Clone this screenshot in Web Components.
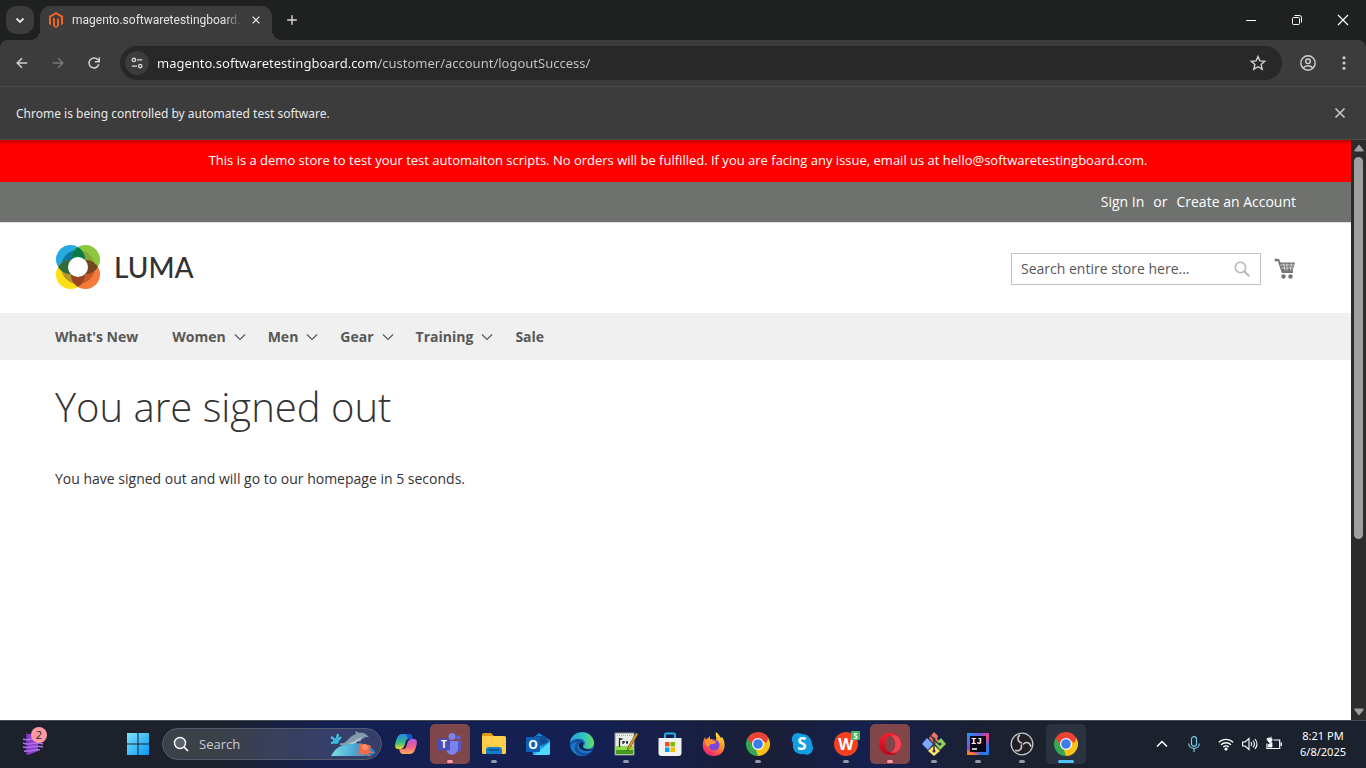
<!DOCTYPE html>
<html lang="en">
<head>
<meta charset="utf-8">
<title>You are signed out</title>
<style>
  html, body { margin: 0; height: 100%; }
  body { font-family: "Open Sans", "Noto Sans", sans-serif; overflow: hidden; background: #3c3c3c; }
</style>
</head>
<body>
<desktop-screen></desktop-screen>

<script>
const ICONS = {
  chevron: ['0 0 16 16', '<path d="M4.500 6.500 8 10l3.500-3.500" fill="none" stroke="#e3e3e3" stroke-width="1.800"/>'],
  magento: ['0 0 16 16', '<path fill="#f26322" d="M8 0 15 4v8l-2 1.200V5.200L8 2.300 3 5.200v8L1 12V4zM7 6.500v7l1 .6 1-.6v-7h0l2 0V14l-3 2-3-2V5.500z"/><path d="M7 5h2v8.500l-1 .6-1-.6z" fill="#3c3c3c"/>'],
  close: ['0 0 16 16', '<path d="m3.500 3.500 9 9m0-9-9 9" stroke="currentColor" stroke-width="1.700" fill="none"/>'],
  plus: ['0 0 16 16', '<path d="M8 2.500v11M2.500 8h11" stroke="#d8d8d8" stroke-width="1.600"/>'],
  minimize: ['0 0 16 16', '<path d="M3 8.500h10" stroke="#fff"/>'],
  restore: ['0 0 16 16', '<rect x="3.500" y="5.500" width="7" height="7" rx="1" fill="none" stroke="#fff"/><path d="M5.500 3.500h5a2 2 0 0 1 2 2v5" fill="none" stroke="#fff"/>'],
  shut: ['0 0 16 16', '<path d="m3 3 10 10m0-10L3 13" stroke="#fff" stroke-width="1.200"/>'],
  back: ['0 0 16 16', '<path d="M14 8H3m5-5.500L2.500 8 8 13.500" fill="none" stroke="#d0d0d0" stroke-width="1.700"/>'],
  forward: ['0 0 16 16', '<path d="M2 8h11M8 2.500 13.500 8 8 13.500" fill="none" stroke="#787878" stroke-width="1.700"/>'],
  reload: ['0 0 16 16', '<path d="M13.500 9.500A5.700 5.700 0 1 1 12.200 4L14 6" fill="none" stroke="#d0d0d0" stroke-width="1.700"/><path d="M14 1.500v5H9" fill="none" stroke="#d0d0d0" stroke-width="1.700"/>'],
  tune: ['0 0 16 16', '<g fill="none" stroke="#d8d8d8" stroke-width="1.500"><circle cx="4.500" cy="4.500" r="1.900"/><path d="M8 4.500h6M2 11.500h6"/><circle cx="11.700" cy="11.500" r="1.900"/></g>'],
  star: ['0 0 16 16', '<path d="m8 1.500 1.900 4.400 4.800.4-3.600 3.200 1.100 4.700L8 11.700l-4.200 2.500 1.100-4.700L1.300 6.300l4.800-.4z" fill="none" stroke="#d0d0d0" stroke-width="1.400"/>'],
  profile: ['0 0 16 16', '<g fill="none" stroke="#d0d0d0" stroke-width="1.400"><circle cx="8" cy="8" r="7.200"/><circle cx="8" cy="6.300" r="2.300"/><path d="M3.200 13c2.500-3 7-3 9.600 0"/></g>'],
  dots: ['0 0 16 16', '<g fill="#d0d0d0"><circle cx="8" cy="2.800" r="1.500"/><circle cx="8" cy="8" r="1.500"/><circle cx="8" cy="13.200" r="1.500"/></g>'],
  luma: ['0 0 44 44', '<circle cx="14.500" cy="14.500" r="14.500" fill="#26a8e0"/><circle cx="29.500" cy="14.500" r="14.500" fill="#8dc63f"/><circle cx="14.500" cy="29.500" r="14.500" fill="#fddd14"/><circle cx="29.500" cy="29.500" r="14.500" fill="#f47a3a"/><clipPath id="tl"><circle cx="14.500" cy="14.500" r="14.500"/></clipPath><clipPath id="tr"><circle cx="29.500" cy="14.500" r="14.500"/></clipPath><clipPath id="bl"><circle cx="14.500" cy="29.500" r="14.500"/></clipPath><clipPath id="br"><circle cx="29.500" cy="29.500" r="14.500"/></clipPath><circle cx="22" cy="22" r="17" fill="#0f76a2" clip-path="url(#tl)"/><circle cx="22" cy="22" r="17" fill="#87a53a" clip-path="url(#tr)"/><circle cx="22" cy="22" r="17" fill="#b6962c" clip-path="url(#bl)"/><circle cx="22" cy="22" r="17" fill="#c55a2b" clip-path="url(#br)"/><g clip-path="url(#tl)"><circle cx="29.500" cy="14.500" r="14.500" fill="#087c46"/><circle cx="14.500" cy="29.500" r="14.500" fill="#2f6a39"/></g><g clip-path="url(#br)"><circle cx="29.500" cy="14.500" r="14.500" fill="#70471f"/><circle cx="14.500" cy="29.500" r="14.500" fill="#9a4524"/></g><circle cx="22" cy="22" r="10" fill="#fff"/>'],
  magnify: ['0 0 16 16', '<circle cx="6.500" cy="6.500" r="5.200" fill="none" stroke="#b8b8b8" stroke-width="1.600"/><path d="m10.300 10.300 4.900 4.900" stroke="#b8b8b8" stroke-width="2"/>'],
  cart: ['0 0 22 22', '<path d="M1 2h3.500l4 12H19" fill="none" stroke="#757575" stroke-width="1.800"/><circle cx="2" cy="2" r="1.500" fill="#757575"/><path d="M4.500 4.500H21L18.500 13H7.500z" fill="#757575"/><path d="M6 7h14M7 10h12M9.500 5.500l1.500 7m2-7v7m4.500-7-1 7" stroke="#fff" stroke-width=".6"/><circle cx="9.500" cy="18.500" r="2.200" fill="#757575"/><circle cx="16.500" cy="18.500" r="2.200" fill="#757575"/>'],
  down: ['0 0 12 12', '<path d="m1 3.500 5 5 5-5" fill="none" stroke="#575757" stroke-width="1.200"/>'],
  arrowup: ['0 0 10 8', '<path d="M5 .5 9.500 6v1.500h-9V6z" fill="#9f9f9f"/>'],
  arrowdown: ['0 0 10 8', '<path d="M5 7.500 9.500 2V.5h-9V2z" fill="#9f9f9f"/>'],
  widget: ['0 0 24 24', '<path d="M5 1l4 2v18l-4 2z" fill="#7031ae"/><path d="M7 2h10v17L7 23z" fill="#8d3fcd"/><path d="M2 7c6 3 12-3 20 0M2 11c7 3 12-2 20 1M2 15c7 2 12-3 20 0M3 19c7 1 10-2 16-1" fill="none" stroke="#ad72ea" stroke-width="1.500"/>'],
  start: ['0 0 24 24', '<linearGradient id="w" x1="0" y1="0" x2="24" y2="24" gradientUnits="userSpaceOnUse"><stop stop-color="#80e8fc"/><stop offset="1" stop-color="#0592f5"/></linearGradient><path fill="url(#w)" d="M1 1h10.500v10.500H1zm11.500 0H23v10.500H12.500zM1 12.500h10.500V23H1zm11.500 0H23V23H12.500z"/>'],
  find: ['0 0 16 16', '<circle cx="7" cy="7" r="5.500" fill="#5b616d" stroke="#fff" stroke-width="1.400"/><path d="m11 11 4 4" stroke="#fff" stroke-width="1.700"/>'],
  dolphin: ['0 0 48 28', '<linearGradient id="sea" x1="0" x2="1"><stop stop-color="#7bdce2"/><stop offset="1" stop-color="#1c78c9"/></linearGradient><path d="M2 26C6 18 14 13 25 13c10 0 18 3 22 10l-6 3z" fill="url(#sea)"/><path d="M11 13c7 2 8-7 16-9l-1-3 5 2c5-1 6 2 9 4-6 0-7 2-9 5l-4-2c-5 3-9 6-16 5z" fill="#829aab"/><path d="M17 13c7 1 10-5 18-6-5 1-5 6-12 7z" fill="#b8c9d0"/><path d="m2 7 3 2m4-5-1 4M2 13l5-1m5-5-3 3" stroke="#4cc7e4" stroke-width="2.200"/><circle cx="7" cy="11" r="3" fill="#39b8df"/><path d="M31 20c-5-6 4-9 6-3 4-5 7 1 3 3l6 3-7 0 3 4-6-3-4 2 0-3-6 3 5-5-6 0z" fill="#ef6b4a"/><circle cx="36" cy="17" r="3" fill="#ff8a61"/>'],
  copilot: ['0 0 24 24', '<linearGradient id="c1" x2="0" y2="1"><stop stop-color="#2387ee"/><stop offset=".55" stop-color="#31b987"/><stop offset="1" stop-color="#f0d91e"/></linearGradient><linearGradient id="c2" x2="0" y2="1"><stop stop-color="#b55aec"/><stop offset=".5" stop-color="#f15c87"/><stop offset="1" stop-color="#ffad54"/></linearGradient><path d="M8 2h7c3 0 3 3 4 5h-4c-3 0-3 2-4 5s-2 5-5 5H4c-4 0-3-5-2-8s2-7 6-7" fill="url(#c1)"/><path d="M16 22H9c-3 0-3-3-4-5h4c3 0 3-2 4-5s2-5 5-5h2c4 0 3 5 2 8s-2 7-6 7" fill="url(#c2)"/><path d="M12 2h3c3 0 3 3 4 5h-5z" fill="#1e4fd0"/>'],
  teams: ['0 0 24 24', '<circle cx="20.500" cy="5.500" r="2.300" fill="#5b67d5"/><circle cx="14" cy="4.500" r="3.500" fill="#7b83eb"/><path d="M18 9h5.500v6c0 3-2 5-4 5h-3z" fill="#5059c9"/><path d="M8 9h12v7c0 9-12 9-12 0z" fill="#7b83eb"/><rect y="6.500" width="12" height="12" rx="1" fill="#4650b8"/><text x="6" y="16" text-anchor="middle" font-size="10" font-weight="700" fill="#fff">T</text>'],
  folder: ['0 0 24 24', '<path d="M0 3q0-2 2-2h7l3 3v5H0z" fill="#e09a10"/><rect y="4" width="24" height="18" rx="1.500" fill="#ffcf4b"/><path d="M4 22v-4q0-3 3-3h10q3 0 3 3v4z" fill="#137dc9"/><path d="M7 18h10" stroke="#0a4f8d" stroke-width="1.500"/>'],
  outlook: ['0 0 24 24', '<path d="m4 8 9-7 11 7v13q0 2-2 2H8z" fill="#1683d8"/><path d="M10 4h9l4 6-12 5z" fill="#124d99"/><path d="m5 8 12 7 7-6v12q0 2-2 2H7z" fill="#28a8ea"/><path d="M8 23 24 10v11q0 2-2 2z" fill="#50d9ff"/><rect y="5" width="14" height="15" rx="1.200" fill="#0f5fb5"/><text x="7" y="17" text-anchor="middle" font-size="12" font-weight="700" fill="#fff">O</text>'],
  edge: ['0 0 24 24', '<linearGradient id="e1" x1="0" x2="1"><stop stop-color="#229ee0"/><stop offset=".6" stop-color="#35c5bb"/><stop offset="1" stop-color="#66dc58"/></linearGradient><circle cx="12" cy="12" r="12" fill="#1879c9"/><path d="M0 11C1-2 21-4 24 10c1 6-6 8-10 6-2-1 1-2 1-5 0-5-9-6-15 0z" fill="url(#e1)"/><path d="M0 11c5-6 12-4 13-1-7-1-7 7-2 10s10 0 11-1c-3 5-11 6-15 2-3-3-3-8 0-11-4 0-6 3-7 4z" fill="#164d9f"/><path d="M13 10c-6 0-5 6-1 8s10 1 11-1c1-1 0-1-1 0-3 1-8 0-9-2s2-3 0-5" fill="#14234e"/>'],
  notes: ['0 0 24 24', '<rect x="1" y="1" width="19" height="22" fill="#e7eeea" stroke="#7f8e84"/><path d="M2 14h17v8H2z" fill="#8fdb4a"/><path d="M2 18h17v4H2z" fill="#3f9b18"/><path d="M3 3.500h15" stroke="#a3aca6" stroke-dasharray="1 1"/><path d="M5.500 6v9M5.500 7h3M9 10h2m1 0h2M9 9v3m4-3v3" stroke="#252525" stroke-width="1.300"/><path d="m22 1-8 14-1 4 3-3 8-14z" fill="#e69b23" stroke="#734e1c" stroke-width=".7"/>'],
  store: ['0 0 24 24', '<path d="M7 7V2.500Q7 1.500 8 1.500h8q1 0 1 1V7" fill="none" stroke="#27aee6" stroke-width="2"/><path d="M.5 6h23v15q0 3-3 3h-17q-3 0-3-3z" fill="#f2f2f2"/><path d="M7 10h4.500v4.500H7z" fill="#f25022"/><path d="M12.500 10H17v4.500h-4.500z" fill="#7fba00"/><path d="M7 15.500h4.500V20H7z" fill="#00a4ef"/><path d="M12.500 15.500H17V20h-4.500z" fill="#ffb900"/>'],
  firefox: ['0 0 24 24', '<linearGradient id="f1" x1=".8" x2=".2" y2="1"><stop stop-color="#fff14d"/><stop offset=".4" stop-color="#ff9a22"/><stop offset=".8" stop-color="#ff3b59"/><stop offset="1" stop-color="#e52088"/></linearGradient><path d="M14 0c3 2 4 5 5 6l1-1c5 7 3 19-8 19C2 24-2 14 3 5l1 3 4-4v3l6 1c1-3-1-4 0-8" fill="url(#f1)"/><circle cx="12" cy="13" r="5.500" fill="#7947df"/><path d="M3 8c4-3 6 0 10 1 2 1 0 3-3 3-2 0-3 1-3 3-4-2-4-5-4-7" fill="#ff9630"/>'],
  chrome: ['0 0 24 24', '<path d="M12 12 1.600 6A12 12 0 0 1 22.400 6z" fill="#ea4335"/><path d="M12 12 22.400 6A12 12 0 0 1 12 24z" fill="#fbc116"/><path d="M12 12v12A12 12 0 0 1 1.600 6z" fill="#34a853"/><path d="M12 6h10.400l-2 5zM7 14.500 1.600 6 12 6z" fill="#ea4335"/><path d="m17 14.500-5 9.500-2-6z" fill="#fbc116"/><circle cx="12" cy="12" r="6" fill="#fff"/><circle cx="12" cy="12" r="4.800" fill="#3b7ded"/>'],
  skype: ['0 0 24 24', '<path d="M8 1c2 0 3 1 4 1 6 0 10 5 10 10 0 1 1 2 1 4 0 6-6 8-9 6-8 1-12-4-11-11C0 6 3 1 8 1" fill="#139ce0"/><text x="12" y="18" text-anchor="middle" font-size="17" font-weight="700" fill="#fff">S</text>'],
  wps: ['0 0 24 24', '<circle cx="12" cy="12" r="12" fill="#f43f20"/><text x="12" y="18" text-anchor="middle" font-size="16" font-weight="700" fill="#fff">W</text><rect x="17" y="-1" width="9" height="9" rx="1" fill="#48b866"/><text x="21.500" y="6.500" text-anchor="middle" font-size="8" font-weight="700" fill="#fff">S</text>'],
  opera: ['0 0 24 24', '<linearGradient id="o1" x2="0" y2="1"><stop stop-color="#ff1b2d"/><stop offset="1" stop-color="#b7081b"/></linearGradient><path fill="url(#o1)" fill-rule="evenodd" d="M12 1C5 1 1 6 1 12s4 11 11 11 11-5 11-11S19 1 12 1m0 3c3 0 5 4 5 8s-2 8-5 8-5-4-5-8 2-8 5-8"/><path d="M12 4c5-3 11 1 11 8s-6 11-11 8c7 0 7-16 0-16" fill="#ee4550"/>'],
  git: ['0 0 24 24', '<path d="m12 0 4 4-1 3 2 2-5 3-5-6z" fill="#f17369"/><path d="m5 6 6 6-5 6-6-6z" fill="#7ba7ff"/><path d="m19 6 5 6-6 6-5-6z" fill="#8bd35e"/><path d="m12 13 6 6-6 5-6-5z" fill="#ffe371"/><path d="m8 3 4 4v13M12 8l6 5" stroke="#35343c" stroke-width="1.500" fill="none"/><circle cx="12" cy="7" r="1.500" fill="#35343c"/><circle cx="18" cy="12" r="1.500" fill="#35343c"/><circle cx="12" cy="19" r="1.500" fill="#35343c"/>'],
  idea: ['0 0 24 24', '<linearGradient id="i1" x2="1" y2="1"><stop stop-color="#19a0f4"/><stop offset=".35" stop-color="#7b51df"/><stop offset=".55" stop-color="#fb417c"/><stop offset=".8" stop-color="#2879e8"/></linearGradient><rect x="1" y="1" width="22" height="22" fill="url(#i1)"/><path d="M1 18v5h12z" fill="#f87a32"/><rect x="4" y="4" width="16" height="16" fill="#090717"/><text x="5" y="12" font-family="Liberation Mono" font-size="9" font-weight="700" fill="#fff">IJ</text><path d="M6 17h5" stroke="#fff" stroke-width="1.500"/>'],
  obs: ['0 0 24 24', '<circle cx="12" cy="12" r="10.800" fill="#211f25" stroke="#c7c6c9" stroke-width="1.300"/><g fill="none" stroke="#c7c6c9" stroke-width="1.600"><path d="M12 11c-5-1-5-6-2-8"/><path d="M12 11c-5-1-5-6-2-8" transform="rotate(120 12 12)"/><path d="M12 11c-5-1-5-6-2-8" transform="rotate(240 12 12)"/></g>'],
  up: ['0 0 16 16', '<path d="m3 10.500 5-5 5 5" fill="none" stroke="#fff" stroke-width="1.500"/>'],
  mic: ['0 0 16 16', '<g fill="none" stroke="#76cbe8" stroke-width="1.200"><rect x="5.500" y=".7" width="5" height="9.500" rx="2.500"/><path d="M2.700 7.500c0 6.500 10.600 6.500 10.600 0M8 12.500V16"/></g>'],
  wifi: ['0 0 16 16', '<g fill="none" stroke="#fff" stroke-width="1.300"><path d="M.8 6.300a10.500 10.500 0 0 1 14.400 0M3 8.700a7.400 7.400 0 0 1 10 0M5.200 11a4.500 4.500 0 0 1 5.600 0"/></g><circle cx="8" cy="13" r="1.600" fill="#fff"/>'],
  volume: ['0 0 16 16', '<g fill="none" stroke="#fff" stroke-width="1.100"><path d="M.6 6h2.500L7 2.500v11L3.100 10H.6zM9 6q1.500 2 0 4M11 4.500q3 3.500 0 7M13 3q4 5 0 10"/></g>'],
  battery: ['0 0 16 16', '<g fill="none" stroke="#fff" stroke-width="1.200"><path d="M7.500 4h6.200v8.500H1V7.500M15.300 6.500V10"/></g><path d="M2.500 11V8.500L6 6.500V11zM3 1v2M1 2.500h5v2L4 7 1.500 4.500zM5 .5v2" fill="#fff" stroke="#fff" stroke-width=".8"/>']
};

/* Shared base: renders the class template into an open shadow root. */
class Piece extends HTMLElement {
  constructor() {
    super();
    this.attachShadow({ mode: 'open' }).innerHTML =
      `<style>*{box-sizing:border-box}button{border:0;padding:0;background:none;font:inherit;color:inherit;display:grid;place-items:center}a{color:inherit;text-decoration:none}input{font:inherit;border:0;outline:0}${this.constructor.css}</style>${this.constructor.html}`;
  }
}
const define = (name, css, html) =>
  customElements.define(name, class extends Piece { static css = css; static html = html; });

customElements.define('ui-icon', class extends HTMLElement {
  connectedCallback() {
    if (this.shadowRoot) return;
    const [box, art] = ICONS[this.getAttribute('name')];
    this.attachShadow({ mode: 'open' }).innerHTML =
      `<style>:host{display:block;flex:none;width:var(--w,var(--size,16px));height:var(--size,16px)}svg{display:block;width:100%;height:100%;overflow:visible}</style><svg viewBox="${box}" aria-hidden="true">${art}</svg>`;
  }
});

define('browser-tabs',
  `:host{display:flex;height:40px;background:#1f2120;color:#e3e3e3;padding-left:6px;align-items:center}
   .list{width:28px;height:28px;border-radius:10px;background:#3c3c3c;margin-right:6px}
   .tab{display:flex;align-items:center;align-self:flex-end;width:232px;height:34px;padding:0 8px 6px;border-radius:10px 10px 0 0;background:#3c3c3c;position:relative}
   .tab::before,.tab::after{content:"";position:absolute;bottom:0;width:10px;height:10px}
   .tab::before{right:100%;background:radial-gradient(circle at 0 0,#1f2120 10px,#3c3c3c 10px)}
   .tab::after{left:100%;background:radial-gradient(circle at 100% 0,#1f2120 10px,#3c3c3c 10px)}
   .title{flex:1;min-width:0;overflow:hidden;white-space:nowrap;margin-left:8px;font-family:Roboto,sans-serif;font-size:12px;line-height:20px;-webkit-mask-image:linear-gradient(90deg,#000 152px,transparent 170px)}
   .tab button{width:16px;height:16px;--size:12px}
   .add{width:20px;height:20px;margin-left:10px;--size:14px}
   .win{display:flex;margin-left:auto}.win button{width:46px;height:40px}`,
  `<button class="list" aria-label="Search tabs"><ui-icon name="chevron"></ui-icon></button>
   <div class="tab"><ui-icon name="magento"></ui-icon><span class="title">magento.softwaretestingboard.c</span><button aria-label="Close tab"><ui-icon name="close"></ui-icon></button></div>
   <button class="add" aria-label="New tab"><ui-icon name="plus"></ui-icon></button>
   <div class="win"><button aria-label="Minimize"><ui-icon name="minimize"></ui-icon></button><button aria-label="Restore"><ui-icon name="restore"></ui-icon></button><button aria-label="Close"><ui-icon name="shut"></ui-icon></button></div>`);

define('browser-toolbar',
  `:host{display:flex;align-items:center;height:46px;background:#3c3c3c;border-radius:8px 8px 0 0;padding:0 10px}
   .nav{display:flex;gap:12px;margin-right:14px}.nav button,.end button{width:24px;height:24px}
   .nav{--size:14px}
   .omni{flex:1;display:flex;align-items:center;height:34px;border-radius:17px;background:#282828;padding:0 16px 0 5px}
   .site{width:24px;height:24px;border-radius:12px;background:#3c3c3c;--size:14px;margin-right:8px}
   input{flex:1;min-width:0;font-family:"Noto Sans",sans-serif;font-size:13px;line-height:20px;padding:0;color:#e3e3e3;background:linear-gradient(90deg,#fff 222px,#c7c7c7 222px);-webkit-background-clip:text;background-clip:text;-webkit-text-fill-color:transparent}
   .end{display:flex;gap:12px;margin-left:14px}`,
  `<div class="nav"><button aria-label="Back"><ui-icon name="back"></ui-icon></button><button aria-label="Forward" disabled><ui-icon name="forward"></ui-icon></button><button aria-label="Reload"><ui-icon name="reload"></ui-icon></button></div>
   <div class="omni"><button class="site" aria-label="Site information"><ui-icon name="tune"></ui-icon></button><input aria-label="Address" value="magento.softwaretestingboard.com/customer/account/logoutSuccess/"><button aria-label="Bookmark"><ui-icon name="star"></ui-icon></button></div>
   <div class="end"><button aria-label="Profile"><ui-icon name="profile"></ui-icon></button><button aria-label="Menu"><ui-icon name="dots"></ui-icon></button></div>`);

define('info-bar',
  `:host{display:flex;align-items:center;justify-content:space-between;height:54px;padding:0 18px 0 16px;box-sizing:border-box;background:#3c3c3c;color:#e8e8e8;border-top:1px solid #4b4b4b;border-bottom:1px solid #4b4b4b;font-family:"Noto Sans",sans-serif;font-size:12px}button{color:#c4c4c4}`,
  `<slot></slot><button aria-label="Dismiss"><ui-icon name="close"></ui-icon></button>`);

define('scroll-track',
  `:host{display:flex;flex-direction:column;align-items:center;gap:5px;width:15px;padding:4px 0;background:#2c2c2c;--w:10px;--size:8px}
   .run{flex:1;width:9px}.thumb{height:70%;border-radius:5px;background:#9f9f9f}`,
  `<ui-icon name="arrowup"></ui-icon><div class="run"><div class="thumb"></div></div><ui-icon name="arrowdown"></ui-icon>`);

define('store-banner',
  `:host{display:block;background:linear-gradient(#c00000,#f00 5px);color:#fff;font-size:13px;line-height:18px;padding:11px 20px 13px 25px;text-align:center}p{margin:0}`,
  `<p><slot></slot></p>`);

define('store-account',
  `:host{display:flex;justify-content:flex-end;gap:9px;height:41px;box-sizing:border-box;background:#6e716e;border-bottom:1px solid #e0e0e0;color:#fff;padding:10px 55px 0;font-size:14px;line-height:20px}`,
  `<a href="#">Sign In</a><span>or</span><a href="#">Create an Account</a>`);

define('store-header',
  `:host{display:flex;align-items:center;justify-content:space-between;height:90px;padding:0 55px;background:#fff}
   .logo{display:flex;align-items:center;gap:14px;font:500 28px/40px Lato,sans-serif;color:#333;--size:44px;padding:0 0 2px 1px}
   .tools{display:flex;align-items:center;gap:13px;padding-top:2px}
   .field{display:flex;align-items:center;width:250px;height:32px;border:1px solid #c2c2c2;padding:0 10px 0 9px}
   input{flex:1;min-width:0;padding:0;font-size:14px;line-height:20px;color:#333}input::placeholder{color:#575757;opacity:1}
   .cart{--size:22px;width:22px}`,
  `<a class="logo" href="#"><ui-icon name="luma"></ui-icon><span>LUMA</span></a>
   <div class="tools"><div class="field"><input type="text" aria-label="Search" placeholder="Search entire store here..."><button aria-label="Search"><ui-icon name="magnify"></ui-icon></button></div><a class="cart" href="#" aria-label="Cart"><ui-icon name="cart"></ui-icon></a></div>`);

define('nav-item',
  `:host{display:block}a{display:flex;align-items:center;gap:8px;--size:12px}ui-icon{display:none}:host([menu]) ui-icon{display:block}`,
  `<a href="#"><slot></slot><ui-icon name="down"></ui-icon></a>`);

define('store-nav',
  `:host{display:block}nav{display:flex;align-items:center;gap:22px;height:47px;background:#f0f0f0;padding:0 55px;color:#575757;font-size:14px;font-weight:700;line-height:20px}.first{margin-right:12px}`,
  `<nav><nav-item class="first">What's New</nav-item><nav-item menu>Women</nav-item><nav-item menu>Men</nav-item><nav-item menu>Gear</nav-item><nav-item menu>Training</nav-item><nav-item>Sale</nav-item></nav>`);

define('store-message',
  `:host{display:block;padding:25px 55px;color:#333}h1{margin:0 0 40px;font-size:40px;font-weight:300;line-height:44px}p{margin:0;font-size:14px;line-height:20px}`,
  `<h1><slot name="title"></slot></h1><p><slot></slot></p>`);

define('task-item',
  `:host{display:block}button{position:relative;width:40px;height:40px;border-radius:5px;--size:24px}
   :host([alert]) button{background:#80464a}:host([active]) button{background:#2c3340}
   :host([open]) button::after{content:"";position:absolute;bottom:1px;width:6px;height:3px;border-radius:2px;background:#9499a8}
   :host([alert]) button::after{background:#ff9aa2}:host([active]) button::after{width:16px;background:#4cc2ff}`,
  `<button><slot></slot></button>`);

define('desk-taskbar',
  `:host{display:flex;align-items:center;height:48px;box-sizing:border-box;border-top:1px solid #474b52;color:#fff;padding:0 18px 1px 21px;background:linear-gradient(90deg,#1c212b 0,#1c212b 16%,#142052 24%,#142052 44%,#1a1f36 56%,#14204f 64%,#1a2036 70%,#1c222d 76%)}
   .widgets{position:relative;width:24px;height:24px;--size:24px;margin-right:73px}
   .badge{position:absolute;left:10px;top:-5px;width:16px;height:16px;border-radius:8px;background:#ff99a4;color:#222;font-size:11px;line-height:16px;text-align:center}
   .search{display:flex;align-items:center;gap:10px;width:220px;height:32px;border:1px solid #545b70;border-radius:16px;background:#ffffff24;padding:0 4px 0 10px;margin:0 4px;font-size:14px}
   .search input{flex:1;min-width:0;background:none;padding:0;color:#fff;font-size:13px;line-height:20px}.search input::placeholder{color:#c9ccd4;opacity:1}
   .fish{--w:48px;--size:28px}
   .apps{display:flex;gap:4px}
   .tray{display:flex;align-items:center;gap:8px;margin-left:auto}.first,.mic{margin-right:8px}
   .clock{display:block;width:50px;text-align:right;font-family:"Noto Sans",sans-serif;font-size:11px;line-height:16px;margin-left:8px}`,
  `<button class="widgets" aria-label="Widgets"><ui-icon name="widget"></ui-icon><span class="badge">2</span></button>
   <task-item><ui-icon name="start"></ui-icon></task-item>
   <label class="search"><ui-icon name="find"></ui-icon><input type="text" aria-label="Search" placeholder="Search"><ui-icon class="fish" name="dolphin"></ui-icon></label>
   <div class="apps">
   <task-item><ui-icon name="copilot"></ui-icon></task-item><task-item open alert><ui-icon name="teams"></ui-icon></task-item>
   <task-item open><ui-icon name="folder"></ui-icon></task-item><task-item><ui-icon name="outlook"></ui-icon></task-item>
   <task-item><ui-icon name="edge"></ui-icon></task-item><task-item open><ui-icon name="notes"></ui-icon></task-item>
   <task-item><ui-icon name="store"></ui-icon></task-item><task-item><ui-icon name="firefox"></ui-icon></task-item>
   <task-item open><ui-icon name="chrome"></ui-icon></task-item><task-item><ui-icon name="skype"></ui-icon></task-item>
   <task-item open><ui-icon name="wps"></ui-icon></task-item><task-item open alert><ui-icon name="opera"></ui-icon></task-item>
   <task-item open><ui-icon name="git"></ui-icon></task-item><task-item open><ui-icon name="idea"></ui-icon></task-item>
   <task-item open><ui-icon name="obs"></ui-icon></task-item><task-item open active><ui-icon name="chrome"></ui-icon></task-item></div>
   <div class="tray"><button class="first" aria-label="Hidden icons"><ui-icon name="up"></ui-icon></button><ui-icon class="mic" name="mic"></ui-icon><ui-icon name="wifi"></ui-icon><ui-icon name="volume"></ui-icon><ui-icon name="battery"></ui-icon>
   <button class="clock"><div>8:21 PM</div><div>6/8/2025</div></button></div>`);

define('desktop-screen',
  `:host{display:flex;flex-direction:column;min-height:100vh;background:#1f2120}
   .view{flex:1;display:flex}main{flex:1;min-width:0;background:#fff}`,
  `<browser-tabs></browser-tabs><browser-toolbar></browser-toolbar>
   <info-bar>Chrome is being controlled by automated test software.</info-bar>
   <div class="view"><main>
     <store-banner>This is a demo store to test your test automaiton scripts. No orders will be fulfilled. If you are facing any issue, email us at hello@softwaretestingboard.com.</store-banner>
     <store-account></store-account><store-header></store-header><store-nav></store-nav>
     <store-message><span slot="title">You are signed out</span>You have signed out and will go to our homepage in 5 seconds.</store-message>
   </main><scroll-track></scroll-track></div>
   <desk-taskbar></desk-taskbar>`);
</script>
</body>
</html>
